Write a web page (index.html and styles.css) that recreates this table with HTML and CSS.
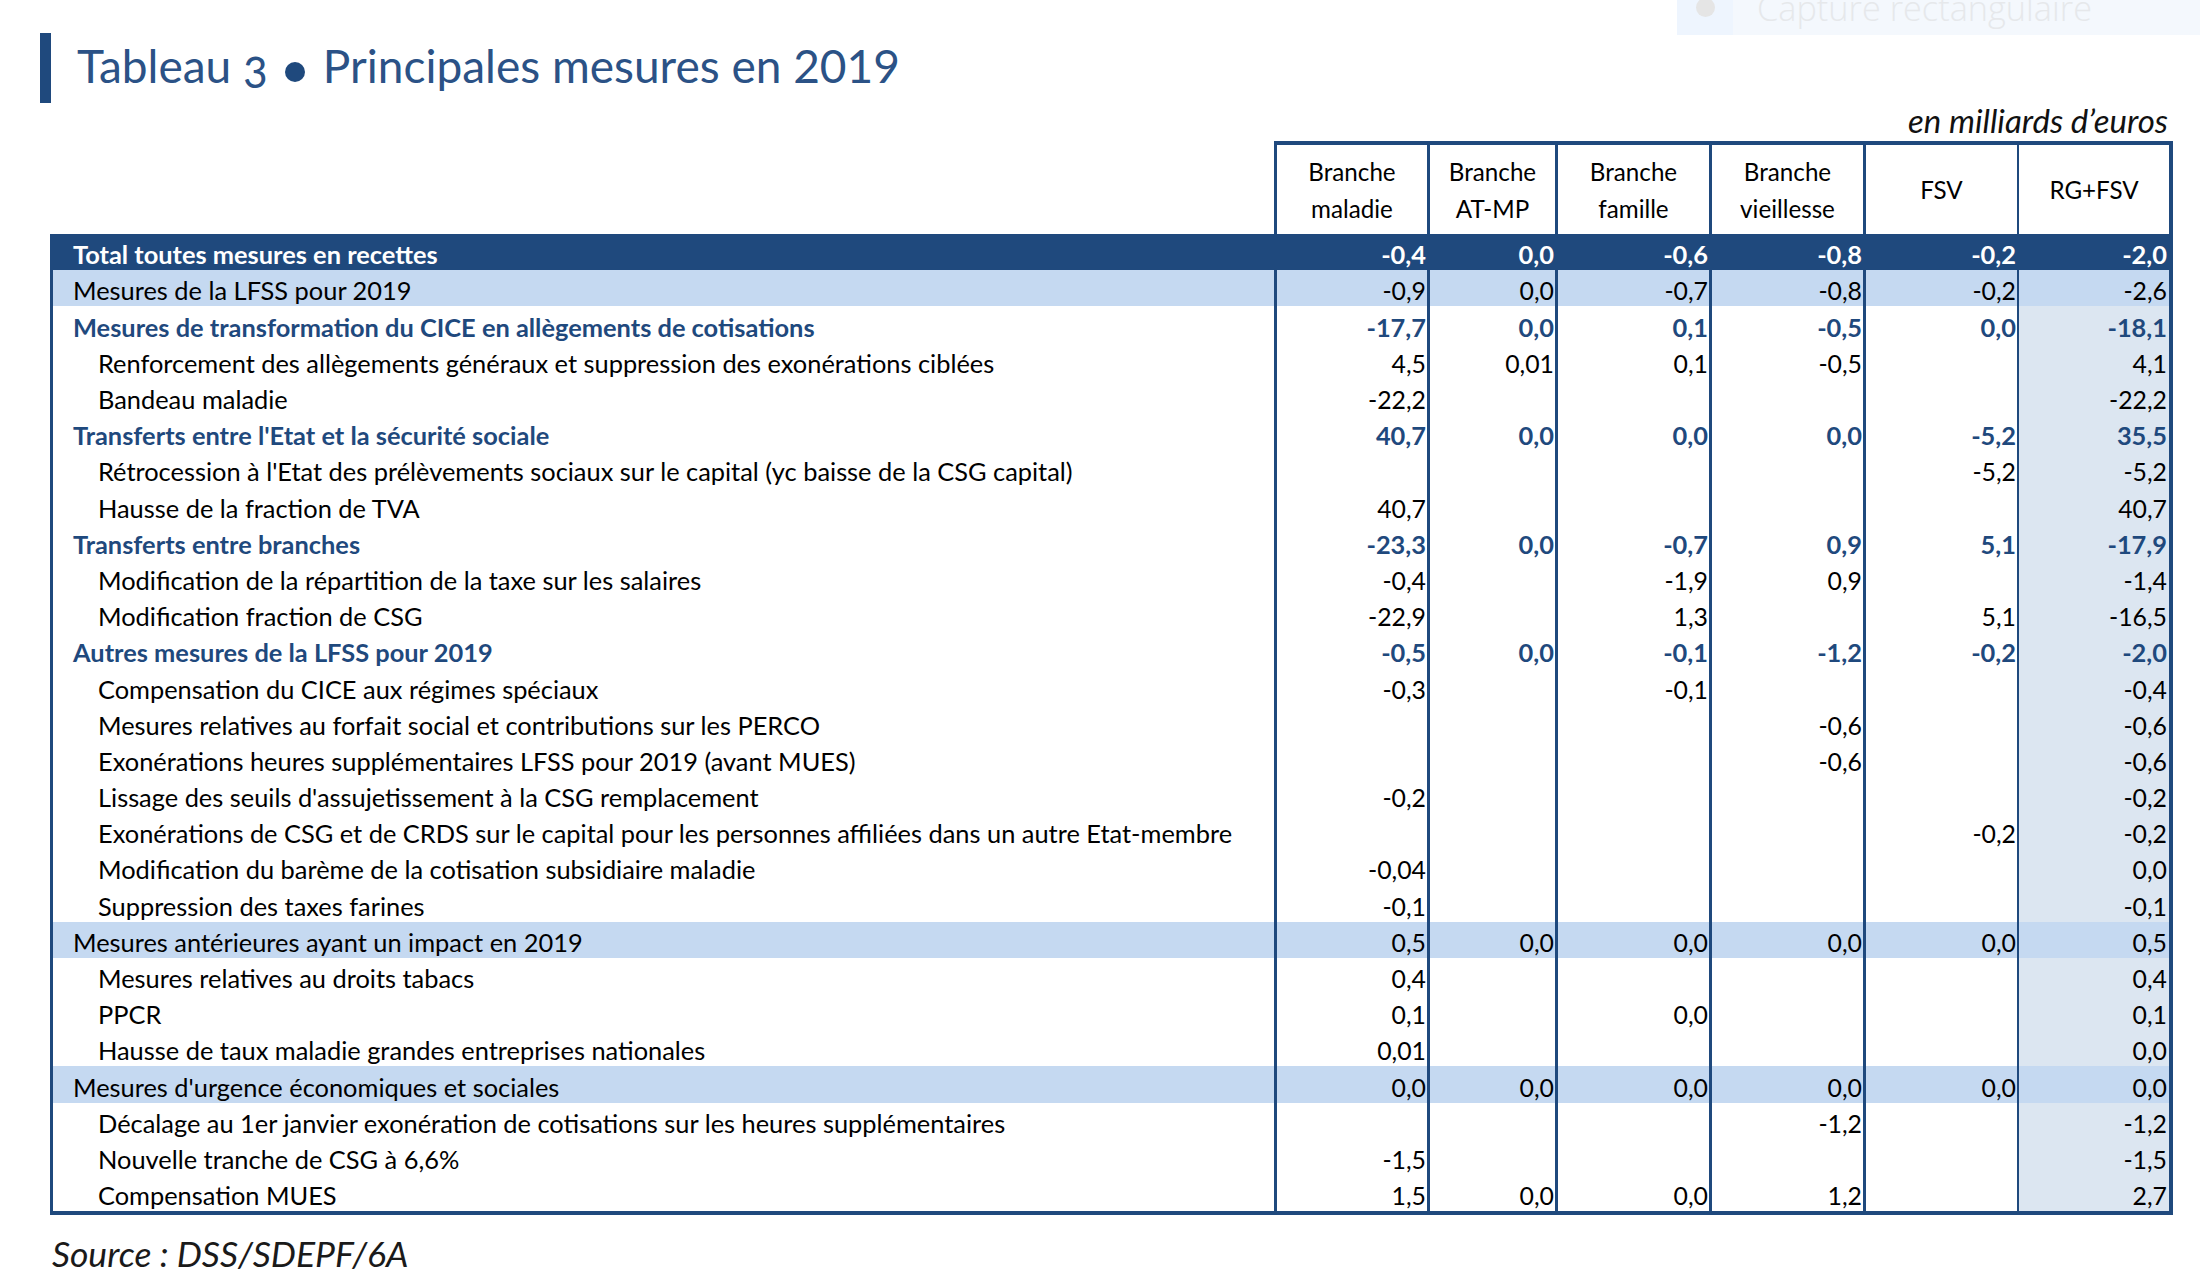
FILE: index.html
```html
<!DOCTYPE html>
<html lang="fr">
<head>
<meta charset="utf-8">
<title>Tableau 3 • Principales mesures en 2019</title>
<link rel="stylesheet" href="styles.css">
</head>
<body>
<div class="page">
  <div class="capture" aria-hidden="true">
    <div class="cap-ico"><span class="cap-dot"></span></div>
    <div class="cap-text">Capture rectangulaire</div>
  </div>

  <header class="title-row">
    <div class="title-bar"></div>
    <h1 class="title">Tableau <span class="old">3</span><span class="dot"></span>Principales mesures en 2019</h1>
  </header>

  <div class="note">en milliards d’euros</div>

  <div class="tbl">
    <div class="thead">
      <div class="th blank"></div>
      <div class="th">Branche<br>maladie</div>
      <div class="th">Branche<br>AT-MP</div>
      <div class="th">Branche<br>famille</div>
      <div class="th">Branche<br>vieillesse</div>
      <div class="th">FSV</div>
      <div class="th rg">RG+FSV</div>
    </div>
    <div class="tbody">
      <div class="row total"><div class="c lbl">Total toutes mesures en recettes</div><div class="c n">-0,4</div><div class="c n">0,0</div><div class="c n">-0,6</div><div class="c n">-0,8</div><div class="c n">-0,2</div><div class="c n rg">-2,0</div></div>
      <div class="row light"><div class="c lbl">Mesures de la LFSS pour 2019</div><div class="c n">-0,9</div><div class="c n">0,0</div><div class="c n">-0,7</div><div class="c n">-0,8</div><div class="c n">-0,2</div><div class="c n rg">-2,6</div></div>
      <div class="row section"><div class="c lbl">Mesures de transformation du CICE en allègements de cotisations</div><div class="c n">-17,7</div><div class="c n">0,0</div><div class="c n">0,1</div><div class="c n">-0,5</div><div class="c n">0,0</div><div class="c n rg">-18,1</div></div>
      <div class="row item"><div class="c lbl">Renforcement des allègements généraux et suppression des exonérations ciblées</div><div class="c n">4,5</div><div class="c n">0,01</div><div class="c n">0,1</div><div class="c n">-0,5</div><div class="c n"></div><div class="c n rg">4,1</div></div>
      <div class="row item"><div class="c lbl">Bandeau maladie</div><div class="c n">-22,2</div><div class="c n"></div><div class="c n"></div><div class="c n"></div><div class="c n"></div><div class="c n rg">-22,2</div></div>
      <div class="row section"><div class="c lbl">Transferts entre l'Etat et la sécurité sociale</div><div class="c n">40,7</div><div class="c n">0,0</div><div class="c n">0,0</div><div class="c n">0,0</div><div class="c n">-5,2</div><div class="c n rg">35,5</div></div>
      <div class="row item"><div class="c lbl">Rétrocession à l'Etat des prélèvements sociaux sur le capital (yc baisse de la CSG capital)</div><div class="c n"></div><div class="c n"></div><div class="c n"></div><div class="c n"></div><div class="c n">-5,2</div><div class="c n rg">-5,2</div></div>
      <div class="row item"><div class="c lbl">Hausse de la fraction de TVA</div><div class="c n">40,7</div><div class="c n"></div><div class="c n"></div><div class="c n"></div><div class="c n"></div><div class="c n rg">40,7</div></div>
      <div class="row section"><div class="c lbl">Transferts entre branches</div><div class="c n">-23,3</div><div class="c n">0,0</div><div class="c n">-0,7</div><div class="c n">0,9</div><div class="c n">5,1</div><div class="c n rg">-17,9</div></div>
      <div class="row item"><div class="c lbl">Modification de la répartition de la taxe sur les salaires</div><div class="c n">-0,4</div><div class="c n"></div><div class="c n">-1,9</div><div class="c n">0,9</div><div class="c n"></div><div class="c n rg">-1,4</div></div>
      <div class="row item"><div class="c lbl">Modification fraction de CSG</div><div class="c n">-22,9</div><div class="c n"></div><div class="c n">1,3</div><div class="c n"></div><div class="c n">5,1</div><div class="c n rg">-16,5</div></div>
      <div class="row section"><div class="c lbl">Autres mesures de la LFSS pour 2019</div><div class="c n">-0,5</div><div class="c n">0,0</div><div class="c n">-0,1</div><div class="c n">-1,2</div><div class="c n">-0,2</div><div class="c n rg">-2,0</div></div>
      <div class="row item"><div class="c lbl">Compensation du CICE aux régimes spéciaux</div><div class="c n">-0,3</div><div class="c n"></div><div class="c n">-0,1</div><div class="c n"></div><div class="c n"></div><div class="c n rg">-0,4</div></div>
      <div class="row item"><div class="c lbl">Mesures relatives au forfait social et contributions sur les PERCO</div><div class="c n"></div><div class="c n"></div><div class="c n"></div><div class="c n">-0,6</div><div class="c n"></div><div class="c n rg">-0,6</div></div>
      <div class="row item"><div class="c lbl">Exonérations heures supplémentaires LFSS pour 2019 (avant MUES)</div><div class="c n"></div><div class="c n"></div><div class="c n"></div><div class="c n">-0,6</div><div class="c n"></div><div class="c n rg">-0,6</div></div>
      <div class="row item"><div class="c lbl">Lissage des seuils d'assujetissement à la CSG remplacement</div><div class="c n">-0,2</div><div class="c n"></div><div class="c n"></div><div class="c n"></div><div class="c n"></div><div class="c n rg">-0,2</div></div>
      <div class="row item"><div class="c lbl">Exonérations de CSG et de CRDS sur le capital pour les personnes affiliées dans un autre Etat-membre</div><div class="c n"></div><div class="c n"></div><div class="c n"></div><div class="c n"></div><div class="c n">-0,2</div><div class="c n rg">-0,2</div></div>
      <div class="row item"><div class="c lbl">Modification du barème de la cotisation subsidiaire maladie</div><div class="c n">-0,04</div><div class="c n"></div><div class="c n"></div><div class="c n"></div><div class="c n"></div><div class="c n rg">0,0</div></div>
      <div class="row item"><div class="c lbl">Suppression des taxes farines</div><div class="c n">-0,1</div><div class="c n"></div><div class="c n"></div><div class="c n"></div><div class="c n"></div><div class="c n rg">-0,1</div></div>
      <div class="row light"><div class="c lbl">Mesures antérieures ayant un impact en 2019</div><div class="c n">0,5</div><div class="c n">0,0</div><div class="c n">0,0</div><div class="c n">0,0</div><div class="c n">0,0</div><div class="c n rg">0,5</div></div>
      <div class="row item"><div class="c lbl">Mesures relatives au droits tabacs</div><div class="c n">0,4</div><div class="c n"></div><div class="c n"></div><div class="c n"></div><div class="c n"></div><div class="c n rg">0,4</div></div>
      <div class="row item"><div class="c lbl">PPCR</div><div class="c n">0,1</div><div class="c n"></div><div class="c n">0,0</div><div class="c n"></div><div class="c n"></div><div class="c n rg">0,1</div></div>
      <div class="row item"><div class="c lbl">Hausse de taux maladie grandes entreprises nationales</div><div class="c n">0,01</div><div class="c n"></div><div class="c n"></div><div class="c n"></div><div class="c n"></div><div class="c n rg">0,0</div></div>
      <div class="row light"><div class="c lbl">Mesures d'urgence économiques et sociales</div><div class="c n">0,0</div><div class="c n">0,0</div><div class="c n">0,0</div><div class="c n">0,0</div><div class="c n">0,0</div><div class="c n rg">0,0</div></div>
      <div class="row item"><div class="c lbl">Décalage au 1er janvier exonération de cotisations sur les heures supplémentaires</div><div class="c n"></div><div class="c n"></div><div class="c n"></div><div class="c n">-1,2</div><div class="c n"></div><div class="c n rg">-1,2</div></div>
      <div class="row item"><div class="c lbl">Nouvelle tranche de CSG à 6,6%</div><div class="c n">-1,5</div><div class="c n"></div><div class="c n"></div><div class="c n"></div><div class="c n"></div><div class="c n rg">-1,5</div></div>
      <div class="row item"><div class="c lbl">Compensation MUES</div><div class="c n">1,5</div><div class="c n">0,0</div><div class="c n">0,0</div><div class="c n">1,2</div><div class="c n"></div><div class="c n rg">2,7</div></div>
    </div>
  </div>

  <div class="source">Source : DSS/SDEPF/6A</div>
</div>
</body>
</html>
```
FILE: styles.css
```css
html, body {
  margin: 0;
  padding: 0;
  background: #ffffff;
  overflow: hidden;
}
body {
  font-family: Lato, "Noto Sans", sans-serif;
  color: #000000;
}
.page {
  position: relative;
  width: 2200px;
  height: 1284px;
  box-sizing: border-box;
  padding-top: 33px;
}

/* faded screen-capture tooltip in the corner */
.capture {
  position: absolute;
  left: 1677px;
  top: 0;
  width: 523px;
  height: 35px;
  background: #f4f8fd;
  display: flex;
  overflow: hidden;
}
.cap-ico {
  width: 56px;
  background: #eef5fe;
  display: flex;
  justify-content: center;
  align-items: flex-start;
}
.cap-dot {
  width: 19px;
  height: 19px;
  border-radius: 50%;
  background: #e5e5e5;
  margin-top: -2px;
}
.cap-text {
  margin: -9px 0 0 24px;
  font-family: "Open Sans", sans-serif;
  font-weight: 300;
  font-size: 34.3px;
  line-height: 34px;
  color: #e6e8eb;
  white-space: nowrap;
}

/* title */
.title-row {
  display: flex;
  align-items: flex-start;
  height: 70px;
  padding-left: 40px;
}
.title-bar {
  width: 11px;
  height: 70px;
  background: #1f497d;
  flex: none;
}
.title {
  margin: 5px 0 0 26px;
  font-weight: 400;
  font-size: 46px;
  line-height: 55.8px;
  letter-spacing: 0;
  color: #2b5286;
  white-space: nowrap;
}
.title .old {
  font-variant-numeric: oldstyle-nums;
}
.title .dot {
  display: inline-block;
  width: 20px;
  height: 20px;
  border-radius: 50%;
  background: #1f497d;
  vertical-align: 1.5px;
  margin: 0 18px 0 17px;
}

.note {
  width: 2123px;
  box-sizing: border-box;
  margin: -2px 0 2px 50px;
  padding-right: 5px;
  text-align: right;
  font-style: italic;
  font-size: 33px;
  line-height: 38px;
  color: #111;
}

/* table */
.tbl {
  margin-left: 50px;
  width: 2123px;
}
.thead {
  display: grid;
  grid-template-columns: 1224px 153px 128px 154px 154px 154px 156px;
  height: 93px;
}
.th {
  box-sizing: border-box;
  border-top: 4px solid #1f497d;
  border-left: 3px solid #1f497d;
  display: flex;
  align-items: center;
  justify-content: center;
  text-align: center;
  font-size: 24.2px;
  line-height: 37px;
}
.th.rg {
  border-left-width: 2px;
  border-right: 4px solid #1f497d;
}
.th.blank {
  border: none;
}
.tbody {
  border: solid #1f497d;
  border-width: 0 4px 4px 3px;
}
.row {
  display: grid;
  grid-template-columns: 1221px 153px 128px 154px 154px 154px 152px;
  height: 36.2px;
}
.c {
  box-sizing: border-box;
  padding-top: 6.3px;
  line-height: 29.9px;
  font-size: 24.8px;
  white-space: nowrap;
}
.lbl {
  padding-left: 20px;
  font-size: 25.4px;
}
.item .lbl {
  padding-left: 45px;
}
.n {
  border-left: 3px solid #1f497d;
  text-align: right;
  padding-right: 1px;
}
.n.rg {
  border-left-width: 2px;
  padding-right: 2px;
  background: #dce6f1;
}
.total {
  background: #1f497d;
  color: #ffffff;
  font-weight: 700;
}
.total .c {
  font-size: 25.4px;
}
.total .n.rg {
  background: #1f497d;
}
.light {
  background: #c5d9f1;
}
.light .n.rg {
  background: #c5d9f1;
}
.section {
  color: #1f497d;
  font-weight: 700;
}
.section .c {
  font-size: 25.4px;
}

.source {
  margin: 17px 0 0 52px;
  font-style: italic;
  font-size: 35.5px;
  line-height: 44px;
  color: #1a1a1a;
}
```
